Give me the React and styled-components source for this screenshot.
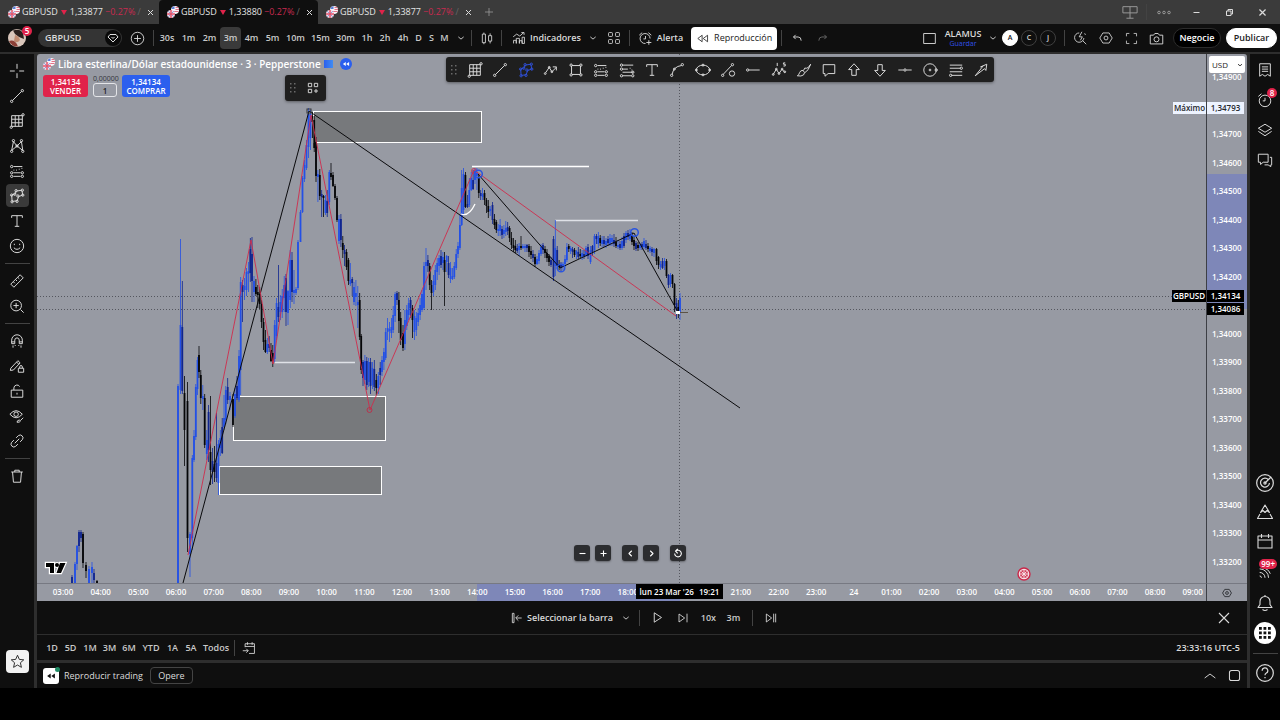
import React from "react";
import styled, { createGlobalStyle, css } from "styled-components";

const c = {
  bar: "#0f0f0f",
  strip: "#3b3b3b",
  line: "#2e2e2e",
  chart: "#979aa3",
  text: "#dbdbdb",
  red: "#e0234a",
  blue: "#2b5fee",
};

const GlobalStyle = createGlobalStyle`
  * { box-sizing: border-box; }
  body {
    margin: 0;
    background: #000;
    color: ${c.text};
    font-family: "Open Sans", "Noto Sans", sans-serif;
    font-size: 9px;
    line-height: 12px;
  }
  button, input, select { font: inherit; color: inherit; margin: 0; padding: 0; border: 0; background: none; }
  svg { display: block; flex: none; }
`;

/* ---------- shell ---------- */

const Page = styled.div`
  height: 100vh;
  min-height: 560px;
  padding-bottom: 32px;
  display: flex;
  flex-direction: column;
  overflow: hidden;
`;

const TabStrip = styled.header`
  height: 24px;
  flex: none;
  display: flex;
  align-items: center;
  background: ${c.strip};
`;

const Tab = styled.div`
  width: 159px;
  height: 24px;
  padding: 0 3px 0 8px;
  display: flex;
  align-items: center;
  gap: 2px;
  border-radius: 4px 4px 0 0;
  background: ${(p) => (p.$active ? c.bar : "transparent")};
  color: #e4e4e4;
  white-space: nowrap;
`;

const TabFade = styled.span`
  margin-right: auto;
  color: #666;
`;

const Down = styled.span`
  width: 0;
  border: 3px solid transparent;
  border-top: 5px solid ${c.red};
  border-bottom: 0;
  margin: 0 1px;
`;

const Loss = styled.span`
  color: #c92a50;
`;

const WindowControls = styled.div`
  margin-left: auto;
  height: 24px;
  display: flex;
  align-items: center;
  padding-right: 1px;
  color: #cfcfcf;
`;

const TopBar = styled.div`
  height: 30px;
  flex: none;
  display: flex;
  align-items: center;
  padding: 0 3px 0 8px;
  background: ${c.bar};
  border-bottom: 2px solid ${c.line};
`;

const Body = styled.div`
  flex: 1;
  min-height: 0;
  display: flex;
  gap: 3px;
  background: ${c.line};
`;

const IconButton = styled.button`
  width: ${(p) => p.$w || 24}px;
  height: ${(p) => p.$h || 24}px;
  flex: none;
  display: flex;
  align-items: center;
  justify-content: center;
  color: ${(p) => p.$color || c.text};
  border-radius: 4px;
  background: ${(p) => (p.$active ? "#3a3a3a" : "transparent")};
  position: relative;
`;

const Divider = styled.span`
  width: 1px;
  height: 16px;
  flex: none;
  background: #434343;
  margin: 0 ${(p) => p.$m || 0}px;
`;

const Spacer = styled.span`
  flex: 1;
`;

const Gap = styled.span`
  width: ${(p) => p.$w}px;
  flex: none;
`;

/* ---------- top bar parts ---------- */

const Avatar = styled.button`
  width: 18px;
  height: 18px;
  flex: none;
  border-radius: 50%;
  position: relative;
  margin-right: 12px;
`;

const Badge = styled.span`
  position: absolute;
  top: ${(p) => p.$top || 0}px;
  right: ${(p) => p.$right || 0}px;
  min-width: 10px;
  height: 10px;
  padding: 0 2px;
  border-radius: 5px;
  background: ${c.red};
  color: #fff;
  font-size: 8px;
  line-height: 10px;
  font-weight: 600;
  text-align: center;
`;

const SymbolPill = styled.button`
  width: 84px;
  height: 18px;
  padding: 0 1px 0 7px;
  display: flex;
  align-items: center;
  justify-content: space-between;
  border-radius: 9px;
  background: #343434;
  font-weight: 600;
`;

const Interval = styled.button`
  width: ${(p) => p.$w}px;
  height: 22px;
  flex: none;
  text-align: center;
  border-radius: 4px;
  font-weight: 600;
  color: #c9c9c9;
  background: ${(p) => (p.$active ? "#3a3a3a" : "transparent")};
`;

const TextButton = styled.button`
  height: 24px;
  display: flex;
  align-items: center;
  gap: 4px;
  font-weight: 600;
  white-space: nowrap;
`;

const ReplayButton = styled(TextButton)`
  width: 86px;
  height: 23px;
  justify-content: center;
  gap: 5px;
  border-radius: 4px;
  background: #fff;
  color: #1a1a1a;
  font-weight: 400;
`;

const LayoutName = styled.button`
  width: 42px;
  text-align: center;
  font-weight: 600;
  span { display: block; line-height: 10px; }
  small { display: block; font-size: 7px; line-height: 9px; font-weight: 400; color: #2f4fe8; }
`;

const Initial = styled.button`
  width: 16px;
  height: 16px;
  margin-right: 3px;
  border-radius: 50%;
  border: 1px solid ${(p) => (p.$on ? "#fff" : "#3f3f3f")};
  background: ${(p) => (p.$on ? "#fff" : "transparent")};
  color: ${(p) => (p.$on ? "#111" : c.text)};
  font-size: 7px;
  line-height: 14px;
  font-weight: 600;
`;

const Pill = styled.button`
  width: ${(p) => p.$w}px;
  height: 20px;
  border-radius: 10px;
  font-weight: 600;
  border: 1px solid ${(p) => (p.$solid ? "#fff" : "#2c2c2c")};
  background: ${(p) => (p.$solid ? "#fff" : "#000")};
  color: ${(p) => (p.$solid ? "#222" : "#fff")};
`;

/* ---------- side bars ---------- */

const LeftBar = styled.nav`
  width: 34px;
  flex: none;
  display: flex;
  flex-direction: column;
  align-items: center;
  padding: 4px 0 15px;
  background: ${c.bar};
`;

const ToolSlot = styled.div`
  height: 25px;
  display: flex;
  align-items: center;
`;

const BarRule = styled.hr`
  width: 25px;
  height: 1px;
  flex: none;
  margin: 5px 0 4px;
  border: 0;
  background: #434343;
`;

const StarButton = styled.button`
  width: 23px;
  height: 23px;
  margin-top: auto;
  display: flex;
  align-items: center;
  justify-content: center;
  border-radius: 4px;
  background: #f2f2f2;
  color: #222;
`;

const RightBar = styled.nav`
  width: 30px;
  flex: none;
  display: flex;
  flex-direction: column;
  align-items: center;
  padding-top: 1px;
  background: ${c.bar};
`;

const AppsButton = styled.button`
  width: 22px;
  height: 22px;
  margin: 5px 0 4px;
  display: flex;
  align-items: center;
  justify-content: center;
  border-radius: 50%;
  background: #fff;
  color: #111;
`;

/* ---------- center ---------- */

const Center = styled.main`
  flex: 1;
  min-width: 0;
  display: flex;
  flex-direction: column;
`;

const ChartArea = styled.section`
  flex: 1;
  min-height: 0;
  display: grid;
  grid-template-columns: 1fr 41px;
  grid-template-rows: 1fr 18px;
  background: ${c.chart};
  border-radius: 3px 3px 0 0;
`;

const Plot = styled.div`
  position: relative;
  overflow: hidden;
  min-width: 0;
  min-height: 0;
`;

const PlotSvg = styled.svg`
  position: absolute;
  inset: 0;
  width: 100%;
  height: 100%;
`;

const Legend = styled.div`
  position: relative;
  padding: 2px 0 0 6px;
  width: max-content;
`;

const TitleRow = styled.div`
  height: 15px;
  display: flex;
  align-items: center;
  gap: 3px;
  color: #fff;
  font-size: 10px;
  font-weight: 600;
  white-space: nowrap;
`;

const FlagMark = styled.span`
  width: 9px;
  height: 8px;
  background: linear-gradient(90deg, #2b5fee, #3f8cf3);
`;

const RewindMark = styled.span`
  width: 12px;
  height: 12px;
  margin-left: 4px;
  border-radius: 50%;
  display: flex;
  align-items: center;
  justify-content: center;
  background: ${c.blue};
`;

const OrderRow = styled.div`
  display: flex;
  align-items: flex-start;
  gap: 5px;
  margin-top: 4px;
`;

const OrderButton = styled.button`
  width: ${(p) => p.$w}px;
  height: 22px;
  border-radius: 3px;
  background: ${(p) => (p.$buy ? c.blue : c.red)};
  color: #fff;
  font-size: 8px;
  line-height: 9px;
  font-weight: 600;
  span { display: block; }
`;

const Quantity = styled.label`
  width: 24px;
  color: #33353b;
  font-size: 7px;
  line-height: 7px;
  text-align: center;
  white-space: nowrap;
  input {
    width: 24px;
    height: 14px;
    display: block;
    margin-top: 1px;
    border: 1px solid #e4e5e8;
    border-radius: 3px;
    text-align: center;
    font-size: 8px;
    font-weight: 600;
    color: #222;
  }
`;

const floating = css`
  position: absolute;
  display: flex;
  align-items: center;
  background: #1f1f1f;
  border-radius: 3px;
  box-shadow: 0 1px 3px rgba(0, 0, 0, 0.4);
`;

const DrawingBar = styled.div`
  ${floating}
  left: 409px;
  top: 3px;
  width: 548px;
  height: 25px;
  padding: 0 3px 0 5px;
  gap: 8px;
`;

const DrawingTools = styled.div`
  flex: 1;
  display: flex;
  justify-content: space-between;
`;

const ObjectBar = styled.div`
  ${floating}
  left: 248px;
  top: 21px;
  width: 41px;
  height: 26px;
  padding: 0 4px 0 5px;
  justify-content: space-between;
`;

const ChartNav = styled.div`
  position: absolute;
  left: 537px;
  bottom: 22px;
  display: flex;
  gap: 5px;
`;

const NavButton = styled.button`
  width: 16px;
  height: 16px;
  margin-right: ${(p) => (p.$end ? 6 : 0)}px;
  display: flex;
  align-items: center;
  justify-content: center;
  border-radius: 3px;
  background: #2c2d30;
  color: #fff;
  box-shadow: 0 1px 2px rgba(0, 0, 0, 0.35);
`;

const BrandMark = styled.svg`
  position: absolute;
  left: 7px;
  bottom: 7px;
`;

const EventMark = styled.svg`
  position: absolute;
  left: 980px;
  bottom: 2px;
`;

const axisText = css`
  color: #fff;
  font-size: 8px;
  line-height: 12px;
  font-weight: 600;
`;

const PriceAxis = styled.div`
  position: relative;
  border-left: 1px solid #3d3f45;
  display: flex;
  flex-direction: column;
  justify-content: space-between;
  padding: 17px 0 15px 5px;
  background: linear-gradient(transparent 120px, #7e87b8 120px, #7e87b8 255px, transparent 255px);
  ${axisText}
`;

const Tick = styled.span`
  height: 12px;
`;

const PriceTag = styled.span`
  position: absolute;
  right: ${(p) => p.$right}px;
  top: ${(p) => p.$top}px;
  width: ${(p) => p.$w}px;
  height: 12px;
  background: ${(p) => (p.$light ? "#edf3ff" : "#000")};
  color: ${(p) => (p.$light ? "#26282d" : "#fff")};
  font-size: 8px;
  line-height: 12px;
  font-weight: 600;
  text-align: center;
`;

const Currency = styled.label`
  position: absolute;
  left: 2px;
  top: 2px;
  width: 36px;
  height: 17px;
  border-radius: 2px;
  background: #fff;
  color: #222;
  display: flex;
  align-items: center;
  padding-right: 2px;
  select { flex: 1; width: 24px; padding-left: 3px; appearance: none; font-size: 8px; line-height: 12px; font-weight: 400; }
`;

const TimeAxis = styled.div`
  position: relative;
  border-top: 1px solid #777982;
  display: flex;
  align-items: center;
  justify-content: space-between;
  padding: 0 1px 2px 14px;
  background: linear-gradient(90deg, transparent 440px, #7e87b8 440px, #7e87b8 643px, transparent 643px);
  ${axisText}
`;

const TimeTick = styled.span`
  width: 24px;
  text-align: center;
`;

const TimeTag = styled.span`
  position: absolute;
  left: 599px;
  top: 0;
  width: 87px;
  height: 15px;
  display: flex;
  align-items: center;
  justify-content: center;
  gap: 5px;
  background: #000;
  white-space: nowrap;
`;

const AxisCorner = styled.div`
  border-left: 1px solid #3d3f45;
  border-top: 1px solid #777982;
  display: flex;
  align-items: center;
  justify-content: center;
`;

const ReplayBar = styled.div`
  height: 34px;
  flex: none;
  display: grid;
  grid-template-columns: 1fr auto 1fr;
  align-items: center;
  padding: 0 11px 0 22px;
  background: ${c.bar};
  border-bottom: 1px solid ${c.line};
`;

const ReplayControls = styled.div`
  display: flex;
  align-items: center;
  font-weight: 600;
`;

const RightSide = styled.div`
  display: flex;
  justify-content: flex-end;
`;

const RangeBar = styled.div`
  height: 25px;
  flex: none;
  display: flex;
  align-items: center;
  padding: 0 7px 0 6px;
  background: ${c.bar};
  font-weight: 600;
`;

const RangeButton = styled.button`
  height: 20px;
  width: ${(p) => p.$w}px;
  color: #c9c9c9;
  text-align: center;
`;

const TradingBar = styled.div`
  height: 25px;
  flex: none;
  margin-top: 3px;
  display: flex;
  align-items: center;
  padding: 0 1px 0 6px;
  background: ${c.bar};
`;

const TradingIcon = styled.span`
  width: 16px;
  height: 16px;
  margin-right: 5px;
  border-radius: 3px;
  display: flex;
  align-items: center;
  justify-content: center;
  background: #fff;
  position: relative;
  &::after {
    content: "";
    position: absolute;
    right: -1px;
    top: -1px;
    width: 5px;
    height: 5px;
    border-radius: 50%;
    background: #1e8a63;
  }
`;

const OutlineButton = styled.button`
  width: 43px;
  height: 17px;
  margin-left: 7px;
  border: 1px solid #444;
  border-radius: 4px;
`;

/* ---------- icons (18 unit grid, hairline strokes) ---------- */

const dot = (x, y, r = 1.3) => `M${x - r} ${y}a${r} ${r} 0 1 0 ${2 * r} 0a${r} ${r} 0 1 0 ${-2 * r} 0`;

const paths = {
  cross: "M9 1v5.5M9 11.5v5.5M1 9h5.5M11.5 9h5.5",
  trend: `M4 14L14 4${dot(3, 15)}${dot(15, 3)}`,
  grid: `M3 3h12v12H3zM7 3v12M11 3v12M3 7h12M3 11h12${dot(2.5, 16)}${dot(15.8, 2)}`,
  xabcd: `M3 14L5 4L9 9L14 4L15.500 14L9 9L3 14${dot(3, 15)}${dot(5, 3)}${dot(9, 9)}${dot(14, 3)}${dot(15.5, 15)}`,
  forecast: `M5 4h10M5 11h8M5 15h8M5 8h1M8 8h1M11 7h1M14 6h1${dot(3, 4)}${dot(3, 11)}${dot(3, 15)}${dot(15, 11)}${dot(15, 15)}`,
  levels: `M4 3.500h12M4 8h6M4 11.500h12M4 15.500h10M12 7h1M14 9h1${dot(2.8, 3.5)}${dot(2.8, 8)}${dot(15.5, 11.5)}${dot(15.5, 15.5)}${dot(2.8, 15.5)}`,
  pattern: `M3.500 15L3 8L7 6.500L8 3.500L14.500 2.500L15.500 8L11 9.500L9 14.500Z${dot(3, 8)}${dot(3.5, 15.5)}${dot(8, 3)}${dot(15, 2.5)}${dot(15.5, 8)}${dot(9, 15)}${dot(10, 9)}${dot(6.5, 7)}`,
  text: "M3 5.5V3h12v2.500M9 3v12M6.500 15h5",
  smile: "M1.500 9a7.500 7.500 0 1 0 15 0a7.500 7.500 0 1 0 -15 0M6 6.500v1.500M12 6.500v1.500M5.500 11q3.500 3.500 7 0",
  ruler: "M2 12.500L12.500 2L16 5.500L5.500 16ZM5 10l1.500 1.500M7.500 7.500l1.500 1.500M10 5l1.500 1.500",
  zoomIn: "M2 8.500a6 6 0 1 0 12 0a6 6 0 1 0 -12 0M13 13l3.500 3.500M8 5.500v6M5 8.500h6",
  magnet: "M3 12V8a6 6 0 0 1 12 0v4h-3.500V8a2.500 2.500 0 0 0 -5 0v4ZM3 10h3.500M11.500 10h3.500M4.500 14v2.500M7 13.500v1M11 13.500v1M13.500 14v2.500",
  pencilLock: "M2 11.500L10 3L12.500 5.500L5 13.500L1.500 14ZM8.500 4.500l2.500 2.500M10.500 11.500h6v4.500h-6zM12 11.500V10a1.500 1.500 0 0 1 3 0v1.500",
  lock: "M2.500 8h13v8h-13zM9 11v2M5.500 8V5.500a3.500 3.500 0 0 1 6.500 -1.500",
  eye: "M1 7q7 -8 14 0q-7 8 -14 0M5.500 7a2.500 2.500 0 1 0 5 0a2.500 2.500 0 1 0 -5 0M9 16q0 -2 2.500 -2.500l1.500 1q-1 2 -4 1.500M13 14l3 -3",
  link: "M6.500 11.500L11.500 6.500M8 5.500L10.500 3a3.200 3.200 0 0 1 4.500 4.500L12.500 10M10 12.500L7.500 15a3.200 3.200 0 0 1 -4.500 -4.500L5.500 8",
  trash: "M2.500 4.500h13M6.500 4.500V2.500h5V4.500M4 4.500L5 16h8l1 -11.500",
  star: "M9 1.500l2.200 5l5.300 .5l-4 3.500l1.200 5.500L9 13.200L4.300 16l1.200 -5.500l-4 -3.500l5.300 -.5z",
  zigzag: `M3 12L7 6L10 11L15 6M15 9.500V5.500h-4${dot(2.5, 13, 1)}${dot(7, 6, 1)}${dot(10, 11, 1)}`,
  rect: `M4.500 4h9M4.500 14h9M4 4.500v9M14 4.500v9${dot(3.5, 3.5)}${dot(14.5, 3.5)}${dot(3.5, 14.5)}${dot(14.5, 14.5)}`,
  curve: `M3.500 14Q5 5 14 4${dot(3, 15)}${dot(6, 8, 1.1)}${dot(15, 3)}`,
  ellipse: `M1.500 9a7.500 5.500 0 1 0 15 0a7.500 5.500 0 1 0 -15 0${dot(1.5, 9, 1.1)}${dot(16.5, 9, 1.1)}${dot(9, 3.5, 1.1)}${dot(9, 14.5, 1.1)}`,
  lineCircle: `M3.500 14L13 4${dot(3, 15)}${dot(14, 3)}${dot(13.5, 13, 3)}`,
  hline: `M4.500 9H16.500${dot(3, 9)}`,
  elliott: `M2.500 14L6 8L9 13L12.500 8L15.500 12${dot(2.5, 14, 1)}${dot(6, 8, 1)}${dot(9, 13, 1)}${dot(12.5, 8, 1)}${dot(15.5, 11, 1)}M7 1v3.500M16 1h-2v1.500h2v2h-2`,
  brush: "M1.500 15.500q2 -1 2.500 -3.500q1 -3 4 -2.500q3 2.500 .5 5q-2.500 2 -7 1M8.500 9.500Q9.500 5.500 12 7Q14 7 16.500 2.500M10 12Q14 10 16.500 2.500",
  comment: "M2.500 3h13v10H8l-3.500 3v-3h-2z",
  arrowUp: "M9 2L15 8.500h-3.500V15h-5V8.500H3Z",
  arrowDown: "M9 16L3 9.500h3.500V3h5v6.500H15Z",
  hmid: `M1.500 9h6M10.500 9h6${dot(9, 9)}`,
  circle: `M2 9a7 7 0 1 0 14 0a7 7 0 1 0 -14 0${dot(9, 9, 1)}${dot(16, 9)}`,
  fib: `M2 3.500h14M2 7h12M2 11h14M4 15h12${dot(15, 7)}${dot(3, 15)}`,
  arrowDiag: "M2.500 15.500L11 5L8.500 5.500L15.500 2.500L14.500 9.500L13 7.500Z",
  note: "M3 2h12v14l-3 -2l-3 2l-3 -2l-3 2zM5.500 5.500h7M5.500 8h7M5.500 10.500h7",
  alarm: "M2.500 10a6.500 6.500 0 1 0 13 0a6.500 6.500 0 1 0 -13 0M9 6.500V10H6.500M1.500 5L5 2M13 2l3.500 3",
  alarmPlus: "M14.500 9A6 6 0 1 0 9 15M9 6v3.500H6.500M1.500 5L5 2M12.500 2l3.500 3M13 11v5.500M10 13.800h6",
  layers: "M1.500 7L9 2.500L16.500 7L9 11.500ZM1.500 10.500L9 15.500L16.500 10.500",
  chat: "M1.500 2.500h11v9H7l-3 2.500v-2.500h-2.500zM14.500 6h2v8.500h-1v2l-3 -2H8.500",
  radar: "M1.500 9a7.500 7.500 0 1 0 15 0a7.500 7.500 0 1 0 -15 0M12 6a4 4 0 1 0 1 3M9 9L14 4M8 9a1 1 0 1 0 2 0a1 1 0 1 0 -2 0",
  pyramid: "M4.500 9.500L9 2L13.500 9.500L11 7.500L9 9.500L7 7.500ZM4 11L1.500 15.500h15L14 11",
  calendar: "M2 4h14v12H2zM2 8h14M5.500 2v4M12.500 2v4",
  feed: "M3 13.500a2 2 0 0 1 2 2M3 9.500a6 6 0 0 1 6 6M3 5.500a10 10 0 0 1 10 10M9 5a9 9 0 0 1 6 6",
  bell: "M2 13.500h14l-2 -3V7.500a5 5 0 0 0 -10 0v3zM6.500 15.500q2.500 2 5 0M9 2.500V1",
  help: "M1.500 9a7.500 7.500 0 1 0 15 0a7.500 7.500 0 1 0 -15 0M6.500 7a2.500 2.500 0 1 1 3.500 2.200Q9 9.700 9 11M9 12.500v1.200",
  close: "M4 4l10 10M14 4L4 14",
  plus: "M9 3v12M3 9h12",
  minus: "M3 9h12",
  plusCircle: "M1.500 9a7.500 7.500 0 1 0 15 0a7.500 7.500 0 1 0 -15 0M9 5v8M5 9h8",
  chevron: "M3 6.500l6 5l6 -5",
  chevronUp: "M1 12l8 -6l8 6",
  left: "M11.500 3.500L6 9l5.500 5.500",
  right: "M6.500 3.500L12 9l-5.500 5.500",
  reset: "M5 5.500a6 6 0 1 1 -2 4.500M8.500 1.500L4.500 5.500L8.500 9.500",
  candles: "M3 4h4v11h-4zM5 2v2M5 15v2M11 6h4v7h-4zM13 3v3M13 13v3",
  indicators: "M2 16v-4h3.500v4M5.500 16V9.500h4V16M9.500 16v-3.500h3.500V16M13 16V8h3v8ZM1.500 7.500L6 4l4 2.500L15 2M12 2h3.500v3",
  four: "M3 2h3q1 0 1 1v3q0 1 -1 1H3q-1 0 -1 -1V3q0 -1 1 -1M12 2h3q1 0 1 1v3q0 1 -1 1h-3q-1 0 -1 -1V3q0 -1 1 -1M3 11h3q1 0 1 1v3q0 1 -1 1H3q-1 0 -1 -1v-3q0 -1 1 -1M12 11h3q1 0 1 1v3q0 1 -1 1h-3q-1 0 -1 -1v-3q0 -1 1 -1",
  fourPlus: "M2 2h5v5h-5zM11 2h5v5h-5zM2 11h5v5h-5zM13.500 10.500v6M10.500 13.500h6",
  rewind: "M8.500 4.500L2.500 9L8.500 13.500ZM16 4.500L10 9L16 13.500Z",
  undo: "M6 3L2.500 6.500L6 10M2.500 6.500H10q5 0 5 6",
  redo: "M12 3L15.500 6.500L12 10M15.500 6.500H8q-5 0 -5 6",
  layout: "M2 3h14v12h-14z",
  search: "M12.500 12.500L17 17M8 2.500A6 6 0 1 0 14 9M11.500 1L8 7.500h4L9.500 12M15 3l1 2",
  hex: "M5 2.500h8L17 9l-4 6.500H5L1 9ZM6.500 9a2.500 2.500 0 1 0 5 0a2.500 2.500 0 1 0 -5 0",
  expand: "M2 6V2h4M12 2h4v4M16 12v4h-4M6 16H2v-4",
  camera: "M1.500 5h4l1.500 -2h4l1.500 2h4v10.500h-15zM6 10a3 3 0 1 0 6 0a3 3 0 1 0 -6 0",
  play: "M4.500 2.500L14.500 9L4.500 15.500Z",
  step: "M3 3L11.500 9L3 15ZM15 2.500v13",
  jumpEnd: "M2 3L10 9L2 15ZM13 2.500v13M16 2.500v13",
  barPick: "M2 2v14M4.500 2v14M2 2h2.500M2 16h2.500M16 9H7.500M11 5L7 9l4 4",
  calGo: "M4 8V3.500h12V16H9M4 7h12M7 1.500v3.500M13 1.500v3.500M1 12.500h7M5.500 10l2.500 2.500L5.500 15",
  panel: "M2 7V5q0 -3 3 -3h8q3 0 3 3v2M16 11v2q0 3 -3 3H5q-3 0 -3 -3v-2M2 7v4M16 7v4",
  restore: "M3 6h9v9H3zM6 6V3h9v9h-3",
  screens: "M1 3h16v7H1zM9 3v13M5 16h8",
};

const solid = { rewindSolid: "M8.500 4.500L2 9L8.500 13.500ZM16 4.500L9.500 9L16 13.500Z" };

function Icon({ name, size = 16, weight = 1.1, color = "currentColor" }) {
  return (
    <svg width={size} height={size} viewBox="0 0 18 18" aria-hidden="true" overflow="visible">
      <path
        d={paths[name] || solid[name]}
        fill={solid[name] ? color : "none"}
        stroke={solid[name] ? "none" : color}
        strokeWidth={weight}
        strokeLinejoin="round"
      />
    </svg>
  );
}

const Grip = () => (
  <svg width="6" height="10" viewBox="0 0 6 10" fill="#6a6a6a" aria-hidden="true">
    {[0, 4, 8].map((y) => [0, 4].map((x) => <rect key={x + "-" + y} x={x} y={y} width="1.5" height="1.5" />))}
  </svg>
);

const PairFlags = () => (
  <svg width="12" height="12" viewBox="0 0 12 12" aria-hidden="true">
    <circle cx="8" cy="4" r="4" fill="#fbf4f8" />
    <path d="M4.300 3A4 4 0 0 1 7.500 0v3H4.200z" fill="#5a7fd6" />
    <path d="M8.500 1.500h2.800M8.500 3.500h3.500M5 5.500h6.500" stroke="#e0647a" strokeWidth="0.9" />
    <circle cx="4" cy="8" r="4" fill="#f3dde6" />
    <path d="M1.200 5.200l5.600 5.600M6.800 5.200L1.200 10.800" stroke="#7f93d8" strokeWidth="0.9" />
    <path d="M4 4v8M0 8h8" stroke="#e2566e" strokeWidth="1.5" />
  </svg>
);

/* ---------- chart data: x, high, body top, body bottom, low, kind (u up, d down, n mixed) ---------- */

const bars = [
  [72, 575, 577, 583, 583, "n"], [75, 562, 564, 583, 583, "u"], [77, 545, 546, 564, 570, "u"], [79, 530, 532, 546, 552, "n"], [81, 530, 532, 538, 542, "n"], [83, 532, 534, 563, 568, "d"], [86, 562, 565, 571, 578, "d"], [89, 566, 569, 583, 583, "u"], [92, 562, 567, 573, 583, "u"], [94, 569, 573, 580, 583, "n"], [97, 580, 581, 583, 583, "d"],
  [178, 384, 386, 583, 583, "u"], [180.5, 239, 325, 390, 394, "u"], [182.3, 281, 327, 391, 394, "n"], [184.5, 376, 393, 430, 466, "d"], [187.5, 382, 401, 538, 552, "d"], [190, 532, 534, 554, 577, "u"], [192.3, 455, 458, 538, 550, "u"], [194, 430, 436, 460, 462, "u"], [195.8, 384, 387, 437, 440, "u"], [197.5, 357, 360, 389, 395, "u"], [199, 346, 355, 372, 378, "d"], [200.8, 370, 375, 398, 404, "d"], [202.8, 385, 396, 399, 410, "u"], [204.7, 394, 398, 445, 448, "d"], [206.8, 430, 440, 454, 460, "u"], [208.6, 405, 412, 450, 462, "n"], [210.5, 396, 452, 470, 485, "d"], [212.5, 448, 461, 472, 484, "n"], [214.5, 446, 464, 472, 482, "d"], [216.5, 413, 463, 478, 482, "n"], [218.4, 440, 444, 483, 495, "u"], [220.3, 430, 438, 448, 456, "u"], [222.2, 418, 427, 453, 454, "n"], [224, 395, 418, 427, 430, "u"], [225.8, 386, 390, 420, 424, "u"], [227.7, 378, 387, 400, 404, "n"], [230, 392, 396, 400, 410, "u"], [233, 394, 399, 425, 427, "d"], [235, 388, 394, 416, 418, "u"], [237, 376, 386, 398, 400, "n"], [239, 350, 356, 400, 402, "u"], [240.7, 277, 282, 370, 395, "u"], [242.6, 280, 285, 292, 322, "n"], [244.5, 278, 286, 290, 300, "u"], [246.5, 268, 272, 290, 296, "u"], [248.4, 262, 271, 274, 292, "u"], [250.3, 238, 249, 273, 282, "n"], [252, 237, 254, 281, 302, "n"], [254, 276, 281, 292, 302, "u"], [255.9, 279, 287, 294, 296, "d"], [257.8, 285, 292, 295, 308, "d"], [259.7, 287, 294, 304, 309, "d"], [261.6, 300, 304, 322, 328, "d"], [263.5, 318, 322, 342, 350, "d"], [265.4, 330, 340, 352, 353, "d"], [267.3, 338, 344, 352, 354, "u"], [269.2, 336, 344, 348, 352, "n"], [271, 343, 350, 361, 362, "d"], [272.8, 345, 353, 361, 367, "d"], [274.7, 320, 325, 359, 362, "u"], [276.6, 298, 303, 336, 340, "u"], [278.4, 265, 307, 317, 322, "n"], [280.3, 295, 302, 312, 320, "u"], [282.2, 289, 296, 312, 318, "u"], [284.2, 276, 285, 298, 312, "u"], [286, 274, 278, 312, 326, "n"], [288, 290, 291, 313, 325, "u"], [290.2, 250, 260, 300, 308, "u"], [292, 252, 260, 292, 302, "n"], [294, 270, 290, 293, 304, "u"], [296, 287, 289, 293, 295, "u"], [298, 240, 242, 288, 290, "u"], [300.5, 210, 212, 242, 242, "u"], [302.5, 176, 178, 212, 213, "u"], [304.5, 160, 165, 179, 182, "u"], [306.5, 140, 145, 168, 170, "u"], [308.5, 108, 114, 147, 158, "u"], [310.5, 110, 114, 138, 150, "u"], [312.4, 112, 116, 122, 138, "d"], [314.2, 116, 120, 148, 152, "d"], [316, 137, 142, 176, 182, "d"], [317.9, 170, 174, 177, 202, "u"], [319.8, 169, 175, 196, 200, "d"], [321.7, 190, 194, 197, 217, "n"], [323.5, 195, 196, 198, 217, "d"], [325.4, 195, 200, 213, 215, "u"], [327.2, 190, 201, 213, 217, "n"], [329.3, 170, 172, 202, 205, "u"], [331, 163, 173, 177, 180, "d"], [333, 172, 175, 186, 187, "d"], [335, 184, 186, 198, 200, "d"], [337, 196, 198, 220, 222, "d"], [339, 215, 219, 241, 244, "u"], [340.9, 214, 219, 240, 247, "n"], [342.8, 236, 243, 250, 258, "d"], [344.6, 245, 250, 254, 266, "n"], [346.5, 249, 252, 267, 270, "d"], [348.4, 258, 260, 281, 285, "d"], [350.3, 263, 280, 284, 286, "u"], [352.2, 277, 279, 283, 296, "n"], [354, 282, 287, 302, 305, "u"], [355.9, 280, 293, 297, 306, "u"], [357.8, 286, 302, 305, 328, "u"], [359.7, 293, 300, 337, 340, "d"], [361.2, 334, 336, 370, 374, "d"], [363, 360, 362, 378, 386, "n"], [364.9, 355, 361, 380, 384, "u"], [366.8, 357, 361, 385, 390, "n"], [368.7, 358, 362, 382, 387, "u"], [370.5, 358, 362, 386, 394, "n"], [372.4, 362, 368, 385, 389, "u"], [374.3, 360, 369, 387, 391, "n"], [376.3, 374, 380, 388, 395, "d"], [378.3, 372, 376, 388, 394, "u"], [380.2, 362, 368, 375, 385, "n"], [382, 356, 360, 372, 376, "u"], [383.9, 348, 352, 362, 370, "u"], [385.7, 328, 332, 358, 360, "u"], [387.6, 318, 328, 332, 340, "u"], [389.5, 322, 329, 331, 342, "u"], [391.4, 318, 327, 333, 338, "u"], [393.2, 306, 315, 330, 333, "u"], [395.1, 292, 294, 316, 322, "u"], [397, 291, 293, 300, 305, "n"], [398.9, 292, 300, 321, 333, "d"], [400.7, 312, 318, 340, 345, "d"], [403, 325, 333, 348, 351, "d"], [404.9, 310, 320, 344, 350, "u"], [406.8, 305, 310, 326, 330, "u"], [408.7, 298, 303, 315, 320, "u"], [410.6, 297, 300, 308, 318, "n"], [412.5, 305, 308, 320, 338, "d"], [414.4, 310, 316, 332, 340, "u"], [416.3, 312, 318, 330, 336, "u"], [418.2, 308, 313, 322, 326, "u"], [420.1, 298, 305, 315, 320, "u"], [422, 290, 294, 310, 312, "u"], [424, 262, 266, 308, 310, "u"], [426, 248, 262, 266, 290, "u"], [427.9, 255, 260, 266, 272, "n"], [429.7, 263, 266, 285, 290, "d"], [431.5, 280, 285, 293, 310, "d"], [433.4, 275, 281, 292, 296, "u"], [435.3, 265, 270, 285, 290, "u"], [437.2, 258, 263, 272, 280, "u"], [439.1, 255, 258, 266, 275, "u"], [441, 250, 256, 265, 268, "n"], [442.9, 252, 257, 263, 270, "u"], [444.6, 252, 260, 272, 306, "d"], [446.7, 255, 256, 262, 272, "u"], [448.6, 256, 263, 275, 278, "n"], [450.5, 262, 268, 279, 283, "u"], [452.4, 268, 276, 279, 280, "u"], [454.3, 262, 266, 277, 279, "u"], [456.2, 249, 254, 268, 270, "u"], [458, 242, 246, 254, 258, "u"], [459.9, 215, 225, 248, 250, "u"], [461.7, 170, 188, 225, 226, "u"], [463.5, 168, 174, 210, 214, "u"], [465.4, 172, 175, 207, 208, "d"], [467.5, 195, 204, 207, 208, "n"], [469.3, 178, 190, 205, 207, "u"], [471.2, 172, 178, 190, 191, "u"], [473.1, 170, 180, 189, 190, "n"], [475, 168, 171, 180, 184, "u"], [476.9, 168, 173, 176, 190, "u"], [478.8, 174, 178, 193, 198, "d"], [480.7, 190, 193, 196, 200, "n"], [482.6, 188, 194, 197, 200, "u"], [484.5, 190, 193, 200, 205, "d"], [486.4, 198, 200, 206, 213, "d"], [488.3, 200, 206, 212, 218, "d"], [490.2, 206, 209, 211, 216, "u"], [492.5, 202, 205, 220, 224, "n"], [494.4, 214, 219, 225, 229, "d"], [496.3, 220, 222, 230, 233, "d"], [498.2, 224, 229, 231, 236, "u"], [500.1, 219, 225, 231, 236, "u"], [502, 226, 229, 235, 239, "n"], [503.9, 225, 230, 234, 238, "u"], [505.8, 221, 228, 232, 236, "u"], [507.7, 222, 227, 231, 235, "n"], [509.6, 226, 228, 238, 242, "d"], [511.5, 232, 238, 245, 249, "d"], [513.4, 238, 245, 248, 252, "d"], [515.3, 240, 246, 250, 253, "d"], [517.2, 244, 248, 251, 253, "n"], [519.1, 243, 246, 250, 256, "u"], [521, 236, 246, 248, 250, "d"], [522.9, 244, 246, 248, 249, "u"], [525, 244, 246, 248, 252, "u"], [527, 244, 245, 248, 252, "n"], [529, 244, 246, 252, 257, "d"], [531, 246, 251, 255, 259, "d"], [533, 250, 254, 258, 262, "n"], [535, 254, 257, 264, 267, "d"], [537, 256, 259, 264, 265, "u"], [539, 250, 253, 261, 264, "u"], [541, 244, 247, 254, 256, "u"], [543, 243, 245, 250, 254, "n"], [545, 246, 249, 253, 258, "d"], [547, 249, 253, 258, 262, "d"], [549, 254, 256, 262, 266, "d"], [551, 257, 260, 265, 267, "n"], [553.5, 236, 239, 277, 281, "n"], [555.3, 220, 248, 266, 276, "u"], [557.2, 246, 250, 266, 269, "n"], [559.1, 260, 264, 267, 270, "d"], [561, 262, 264, 268, 271, "n"], [563, 262, 264, 267, 270, "u"], [565, 255, 259, 264, 267, "u"], [566.9, 243, 247, 260, 262, "u"], [568.8, 244, 246, 249, 252, "d"], [570.7, 246, 248, 251, 254, "u"], [572.6, 247, 249, 252, 258, "n"], [574.5, 248, 250, 255, 257, "d"], [576.4, 250, 251, 254, 259, "u"], [578.3, 247, 252, 257, 259, "n"], [580.2, 249, 254, 256, 258, "d"], [582.1, 250, 253, 257, 260, "u"], [584, 250, 254, 256, 259, "n"], [586, 246, 248, 255, 257, "u"], [588, 244, 247, 256, 259, "n"], [590.5, 246, 250, 262, 264, "u"], [592.4, 245, 246, 252, 256, "n"], [594.5, 234, 236, 250, 254, "u"], [596.4, 234, 236, 239, 244, "n"], [598.3, 232, 236, 244, 248, "u"], [600.2, 235, 238, 243, 246, "d"], [602.1, 236, 240, 244, 247, "u"], [604, 236, 240, 244, 247, "n"], [606, 238, 241, 245, 248, "u"], [608, 236, 239, 243, 246, "n"], [610, 234, 238, 244, 246, "u"], [612, 235, 238, 242, 246, "u"], [614, 234, 240, 244, 247, "n"], [616, 237, 242, 246, 248, "d"], [618, 240, 245, 247, 249, "u"], [620, 241, 244, 248, 250, "n"], [622, 237, 241, 248, 250, "u"], [624, 233, 236, 246, 248, "n"], [626, 231, 233, 240, 243, "u"], [628, 230, 233, 237, 240, "n"], [630, 229, 234, 239, 241, "u"], [632, 232, 236, 242, 245, "d"], [634, 236, 240, 246, 250, "d"], [636, 241, 243, 249, 251, "n"], [638, 242, 245, 248, 251, "d"], [640, 243, 245, 248, 250, "u"], [642, 242, 244, 247, 250, "n"], [644, 238, 241, 247, 249, "u"], [646, 240, 244, 248, 250, "n"], [648, 243, 246, 249, 252, "d"], [650, 246, 248, 251, 253, "u"], [652, 247, 249, 252, 256, "n"], [654, 248, 249, 253, 257, "u"], [656.5, 248, 249, 261, 265, "d"], [658.5, 256, 257, 265, 269, "d"], [660.5, 261, 264, 267, 270, "u"], [662.5, 258, 261, 268, 269, "n"], [664.5, 258, 261, 266, 270, "u"], [666.5, 259, 261, 276, 278, "d"], [668.5, 274, 275, 285, 288, "n"], [670.5, 273, 275, 284, 287, "u"], [672.5, 274, 275, 284, 288, "d"], [674.5, 283, 284, 305, 312, "d"], [676.5, 298, 303, 310, 319, "n"], [678.3, 300, 307, 312, 318, "d"], [680, 293, 298, 312, 320, "u"],
];

const barColor = { u: "#2350e6", d: "#050608", n: "#10258f" };

const zones = [
  { x: 313, y: 111, w: 168, h: 31 },
  { x: 233, y: 396, w: 152, h: 44 },
  { x: 219, y: 466, w: 162, h: 28 },
];

const ChartDrawing = () => (
  <PlotSvg role="img" aria-label="GBPUSD 3m">
    <g transform="translate(-37 -54)">
      {zones.map((z) => (
        <rect key={z.y} x={z.x + 0.5} y={z.y + 0.5} width={z.w} height={z.h} fill="#77797c" stroke="#fff" />
      ))}
      <path d="M472 166.500H589" stroke="#fff" strokeWidth="1.300" />
      <path d="M555 220.500H638M275 362.500H355" stroke="#dfe1e7" strokeWidth="1.300" />
      <path d="M37 296.500H1172M37 309.500H1206M679.500 54V583" stroke="#54565e" strokeDasharray="1 2" />
      {bars.map(([x, high, top, bottom, low, kind]) => (
        <g key={x} fill={barColor[kind]}>
          <rect x={x - 0.4} y={high} width="0.8" height={low - high} />
          <rect x={x - 0.9} y={top} width="1.8" height={bottom - top} />
        </g>
      ))}
      <g fill="none">
        <path d="M183 583L309 111L740 408" stroke="#0a0a0c" />
        <path d="M188 555L251 240L273 364L311 115L370 410L474 170L676 316" stroke="#cf2c4d" strokeWidth="0.9" />
        <circle cx="369.500" cy="410" r="2.500" stroke="#b8334c" />
        <circle cx="474" cy="171" r="2.500" stroke="#cf2c4d" strokeWidth="0.800" />
        <path d="M478 174L560 268L634 233L678 312" stroke="#0a0a0c" />
        <path d="M461 214q8 3 14 -10" stroke="#fff" strokeWidth="1.300" />
        <g stroke="#2a55e0" strokeWidth="1.500">
          <circle cx="478.500" cy="174" r="3.800" />
          <circle cx="561" cy="268" r="3.800" />
          <circle cx="634.500" cy="232.500" r="3.800" />
        </g>
        <path d="M680 312.500h8" stroke="#5c5346" />
      </g>
      <rect x="307" y="109" width="4" height="4" fill="none" stroke="#33353b" />
      <rect x="676" y="311" width="4" height="3" fill="#fff" />
    </g>
  </PlotSvg>
);

/* ---------- pieces ---------- */

const InstrumentTab = ({ price, active }) => (
  <Tab $active={active}>
    <PairFlags />
    <span>GBPUSD</span>
    <Down />
    <span>{price}</span>
    <Loss>−0.27%</Loss>
    <TabFade>/</TabFade>
    <IconButton $w={12} aria-label="Cerrar pestaña"><Icon name="close" size={9} weight={2} /></IconButton>
  </Tab>
);

const intervals = [["30s", 22], ["1m", 21], ["2m", 21], ["3m", 21], ["4m", 21], ["5m", 21], ["10m", 25], ["15m", 25], ["30m", 25], ["1h", 18], ["2h", 18], ["4h", 18], ["D", 13], ["S", 13], ["M", 13]];

const leftGroups = [
  ["cross", "trend", "grid", "xabcd", "forecast", "pattern", "text", "smile"],
  ["ruler", "zoomIn"],
  ["magnet", "pencilLock", "lock", "eye", "link"],
  ["trash"],
];

const drawingTools = ["grid", "trend", "pattern", "zigzag", "rect", "forecast", "levels", "text", "curve", "ellipse", "lineCircle", "hline", "elliott", "brush", "comment", "arrowUp", "arrowDown", "hmid", "circle", "fib", "arrowDiag"];

const prices = ["1,34900", "", "1,34700", "1,34600", "1,34500", "1,34400", "1,34300", "1,34200", "", "1,34000", "1,33900", "1,33800", "1,33700", "1,33600", "1,33500", "1,33400", "1,33300", "1,33200"];

const times = ["03:00", "04:00", "05:00", "06:00", "07:00", "08:00", "09:00", "10:00", "11:00", "12:00", "13:00", "14:00", "15:00", "16:00", "17:00", "18:00", "", "", "21:00", "22:00", "23:00", "24", "01:00", "02:00", "03:00", "04:00", "05:00", "06:00", "07:00", "08:00", "09:00"];

const ranges = [["1D", 18], ["5D", 19], ["1M", 20], ["3M", 19], ["6M", 20], ["YTD", 24], ["1A", 19], ["5A", 18], ["Todos", 32]];

export default function App() {
  return (
    <>
      <GlobalStyle />
      <Page>
        <TabStrip>
          <InstrumentTab price="1,33877" />
          <InstrumentTab price="1,33880" active />
          <InstrumentTab price="1,33877" />
          <IconButton aria-label="Nueva pestaña" $color="#9a9a9a"><Icon name="plus" size={12} weight={1.2} /></IconButton>
          <WindowControls>
            <IconButton $w={33} aria-label="Pantallas" $color="#999"><Icon name="screens" /></IconButton>
            <Divider />
            <IconButton $w={33} aria-label="Más" $color="#999">
              <svg width="14" height="5" viewBox="0 0 14 5" fill="none" stroke="currentColor" aria-hidden="true">
                <circle cx="2" cy="2.500" r="1.300" /><circle cx="7" cy="2.500" r="1.300" /><circle cx="12" cy="2.500" r="1.300" />
              </svg>
            </IconButton>
            <IconButton $w={33} aria-label="Minimizar"><Icon name="minus" size={9} weight={2} /></IconButton>
            <IconButton $w={33} aria-label="Restaurar"><Icon name="restore" size={9} weight={2} /></IconButton>
            <IconButton $w={33} aria-label="Cerrar"><Icon name="close" size={11} weight={2} /></IconButton>
          </WindowControls>
        </TabStrip>

        <TopBar>
          <Avatar aria-label="Perfil">
            <svg width="18" height="18" viewBox="0 0 18 18">
              <circle cx="9" cy="9" r="9" fill="#d9c6bb" />
              <path d="M5 1.500Q12 -1 15 4L16 10L11 8L7 5Z" fill="#2b1f1d" />
              <path d="M7 6q4 1 5 5q-3 4 -6 1z" fill="#c08a70" />
              <path d="M1 12q6 -2 9 5.500q-6 .5 -9 -5.500z" fill="#8c3f36" />
            </svg>
            <Badge $top={-3} $right={-6}>5</Badge>
          </Avatar>
          <SymbolPill>
            GBPUSD
            <svg width="16" height="16" viewBox="0 0 16 16" aria-hidden="true">
              <circle cx="8" cy="8" r="8" fill="#0a0a0a" />
              <path d="M5 4.500h6l2 2.500L8 12L3 7ZM6.500 7L8 8.500L9.500 7" fill="none" stroke="#ddd" />
            </svg>
          </SymbolPill>
          <IconButton $w={31} aria-label="Comparar"><Icon name="plusCircle" size={15} /></IconButton>
          <Divider />
          <Gap $w={2} />
          {intervals.map(([label, w]) => (
            <Interval key={label} $w={w} $active={label === "3m"}>{label}</Interval>
          ))}
          <IconButton $w={20} aria-label="Más intervalos"><Icon name="chevron" size={8} weight={2} /></IconButton>
          <Divider />
          <IconButton $w={29} aria-label="Velas"><Icon name="candles" size={14} /></IconButton>
          <Divider />
          <Gap $w={10} />
          <TextButton><Icon name="indicators" size={14} />Indicadores</TextButton>
          <Gap $w={2} />
          <IconButton $w={20} aria-label="Favoritos"><Icon name="chevron" size={8} weight={2} /></IconButton>
          <IconButton $w={22} aria-label="Plantillas"><Icon name="four" size={14} /></IconButton>
          <Gap $w={4} />
          <Divider />
          <Gap $w={8} />
          <TextButton><Icon name="alarmPlus" size={15} />Alerta</TextButton>
          <Gap $w={8} />
          <ReplayButton><Icon name="rewind" size={13} />Reproducción</ReplayButton>
          <Gap $w={4} />
          <Divider />
          <IconButton $w={30} aria-label="Deshacer"><Icon name="undo" size={11} weight={1.5} /></IconButton>
          <IconButton $w={20} aria-label="Rehacer" $color="#6b6b6b"><Icon name="redo" size={11} weight={1.5} /></IconButton>
          <Spacer />
          <IconButton $w={26} aria-label="Diseño"><Icon name="layout" size={15} /></IconButton>
          <LayoutName><span>ALAMUS</span><small>Guardar</small></LayoutName>
          <IconButton $w={18} aria-label="Diseños"><Icon name="chevron" size={8} weight={2} /></IconButton>
          <Initial $on>A</Initial>
          <Initial>C</Initial>
          <Initial>J</Initial>
          <Gap $w={5} />
          <Divider />
          <Gap $w={2} />
          <IconButton $w={26} aria-label="Buscar"><Icon name="search" size={14} /></IconButton>
          <IconButton $w={25} aria-label="Configuración"><Icon name="hex" size={14} /></IconButton>
          <IconButton $w={26} aria-label="Pantalla completa"><Icon name="expand" size={13} /></IconButton>
          <IconButton $w={25} aria-label="Captura"><Icon name="camera" size={15} /></IconButton>
          <Gap $w={4} />
          <Pill $w={48}>Negocie</Pill>
          <Gap $w={5} />
          <Pill $w={51} $solid>Publicar</Pill>
        </TopBar>

        <Body>
          <LeftBar>
            {leftGroups.map((group, i) => (
              <React.Fragment key={group[0]}>
                {i > 0 && <BarRule />}
                {group.map((name) => (
                  <ToolSlot key={name}>
                    <IconButton $w={23} $h={23} $active={name === "pattern"} aria-label={name}><Icon name={name} /></IconButton>
                  </ToolSlot>
                ))}
              </React.Fragment>
            ))}
            <StarButton aria-label="Favoritos"><Icon name="star" size={15} /></StarButton>
          </LeftBar>

          <Center>
            <ChartArea>
              <Plot>
                <ChartDrawing />
                <Legend>
                  <TitleRow>
                    <PairFlags />
                    <span>Libra esterlina/Dólar estadounidense · 3 · Pepperstone</span>
                    <FlagMark />
                    <RewindMark><Icon name="rewindSolid" size={8} color="#fff" /></RewindMark>
                  </TitleRow>
                  <OrderRow>
                    <OrderButton $w={45}><span>1,34134</span><span>VENDER</span></OrderButton>
                    <Quantity>0,00000<input defaultValue="1" /></Quantity>
                    <OrderButton $w={48} $buy><span>1,34134</span><span>COMPRAR</span></OrderButton>
                  </OrderRow>
                </Legend>
                <ObjectBar>
                  <Grip />
                  <IconButton $w={18} $h={22} aria-label="Plantilla"><Icon name="fourPlus" size={12} weight={1.4} /></IconButton>
                </ObjectBar>
                <DrawingBar>
                  <Grip />
                  <DrawingTools>
                    {drawingTools.map((name) => (
                      <IconButton key={name} $w={20} $color={name === "pattern" ? "#2f50d8" : c.text} aria-label={name}>
                        <Icon name={name} />
                      </IconButton>
                    ))}
                  </DrawingTools>
                </DrawingBar>
                <ChartNav>
                  <NavButton aria-label="Alejar"><Icon name="minus" size={9} weight={2.2} /></NavButton>
                  <NavButton $end aria-label="Acercar"><Icon name="plus" size={9} weight={2.2} /></NavButton>
                  <NavButton aria-label="Izquierda"><Icon name="left" size={9} weight={2.2} /></NavButton>
                  <NavButton $end aria-label="Derecha"><Icon name="right" size={9} weight={2.2} /></NavButton>
                  <NavButton aria-label="Restablecer"><Icon name="reset" size={10} weight={2} /></NavButton>
                </ChartNav>
                <BrandMark width="24" height="16" viewBox="0 0 24 16" aria-label="TradingView">
                  <path d="M2 3H10V13H6V7H2ZM16 3H21.500L17 13H12.500Z" fill="#000" stroke="#fff" strokeWidth="2.400" />
                  <circle cx="13" cy="5" r="2" fill="#000" stroke="#fff" strokeWidth="2" paintOrder="stroke" />
                  <path d="M2 3H10V13H6V7H2ZM16 3H21.500L17 13H12.500Z" fill="#000" />
                </BrandMark>
                <EventMark width="14" height="14" viewBox="0 0 14 14" aria-hidden="true">
                  <circle cx="7" cy="7" r="6" fill="#f5dfe4" stroke="#c9284a" strokeWidth="1.400" />
                  <circle cx="7" cy="7" r="4" fill="#d2415d" />
                  <path d="M7 3v8M3 7h8M4.500 4.500l5 5M9.500 4.500l-5 5" stroke="#f7e6ea" strokeWidth="0.900" />
                </EventMark>
                <PriceTag $right={0} $top={48} $w={33} $light>Máximo</PriceTag>
                <PriceTag $right={0} $top={236} $w={34}>GBPUSD</PriceTag>
              </Plot>
              <PriceAxis>
                {prices.map((p, i) => <Tick key={i}>{p}</Tick>)}
                <PriceTag $right={3} $top={48} $w={37} $light>1,34793</PriceTag>
                <PriceTag $right={3} $top={236} $w={37}>1,34134</PriceTag>
                <PriceTag $right={3} $top={249} $w={37}>1,34086</PriceTag>
                <Currency>
                  <select aria-label="Moneda" defaultValue="USD"><option>USD</option></select>
                  <Icon name="chevron" size={6} weight={2.6} />
                </Currency>
              </PriceAxis>
              <TimeAxis>
                {times.map((t, i) => <TimeTick key={i}>{t}</TimeTick>)}
                <TimeTag><span>lun 23 Mar '26</span><span>19:21</span></TimeTag>
              </TimeAxis>
              <AxisCorner><Icon name="hex" size={10} weight={1.6} color="#2c2e33" /></AxisCorner>
            </ChartArea>

            <ReplayBar>
              <span />
              <ReplayControls>
                <TextButton><Icon name="barPick" size={12} weight={1.3} />Seleccionar la barra</TextButton>
                <IconButton $w={26} aria-label="Opciones"><Icon name="chevron" size={8} weight={2} /></IconButton>
                <Divider />
                <Gap $w={5} />
                <IconButton $w={26} aria-label="Reproducir"><Icon name="play" size={13} weight={1.3} /></IconButton>
                <IconButton $w={25} aria-label="Avanzar"><Icon name="step" size={12} weight={1.3} /></IconButton>
                <Interval $w={25}>10x</Interval>
                <Interval $w={25}>3m</Interval>
                <Gap $w={6} />
                <Divider />
                <Gap $w={6} />
                <IconButton $w={25} aria-label="Ir al tiempo real"><Icon name="jumpEnd" size={12} weight={1.3} /></IconButton>
              </ReplayControls>
              <RightSide><IconButton aria-label="Salir"><Icon name="close" size={18} /></IconButton></RightSide>
            </ReplayBar>
            <RangeBar>
              {ranges.map(([label, w]) => <RangeButton key={label} $w={w}>{label}</RangeButton>)}
              <Divider $m={2} />
              <IconButton aria-label="Ir a la fecha"><Icon name="calGo" size={14} /></IconButton>
              <Spacer />
              <span>23:33:16 UTC-5</span>
            </RangeBar>
            <TradingBar>
              <TradingIcon><Icon name="rewindSolid" size={10} color="#111" /></TradingIcon>
              <span>Reproducir trading</span>
              <OutlineButton>Opere</OutlineButton>
              <Spacer />
              <IconButton aria-label="Abrir panel"><Icon name="chevronUp" size={12} weight={1.4} /></IconButton>
              <IconButton aria-label="Maximizar"><Icon name="panel" size={13} weight={1.4} /></IconButton>
            </TradingBar>
          </Center>

          <RightBar>
            <IconButton $h={30} aria-label="Lista"><Icon name="note" /></IconButton>
            <IconButton $h={30} aria-label="Alertas"><Icon name="alarm" /><Badge $top={3} $right={0}>8</Badge></IconButton>
            <IconButton $h={30} aria-label="Capas"><Icon name="layers" /></IconButton>
            <IconButton $h={30} aria-label="Chat"><Icon name="chat" /></IconButton>
            <Spacer />
            <IconButton $h={29} aria-label="Filtros"><Icon name="radar" size={20} /></IconButton>
            <IconButton $h={29} aria-label="Ideas"><Icon name="pyramid" size={18} /></IconButton>
            <IconButton $h={29} aria-label="Calendario"><Icon name="calendar" size={18} /></IconButton>
            <IconButton $h={33} aria-label="Noticias"><Icon name="feed" /><Badge $top={4} $right={0}>99+</Badge></IconButton>
            <IconButton $h={29} aria-label="Notificaciones"><Icon name="bell" size={18} /></IconButton>
            <AppsButton aria-label="Productos">
              <svg width="12" height="12" viewBox="0 0 12 12" fill="currentColor">
                {[0, 4.5, 9].map((y) => [0, 4.5, 9].map((x) => <rect key={x + "-" + y} x={x} y={y} width="2.8" height="2.8" />))}
              </svg>
            </AppsButton>
            <BarRule />
            <IconButton $h={30} aria-label="Ayuda"><Icon name="help" size={20} /></IconButton>
          </RightBar>
        </Body>
      </Page>
    </>
  );
}
